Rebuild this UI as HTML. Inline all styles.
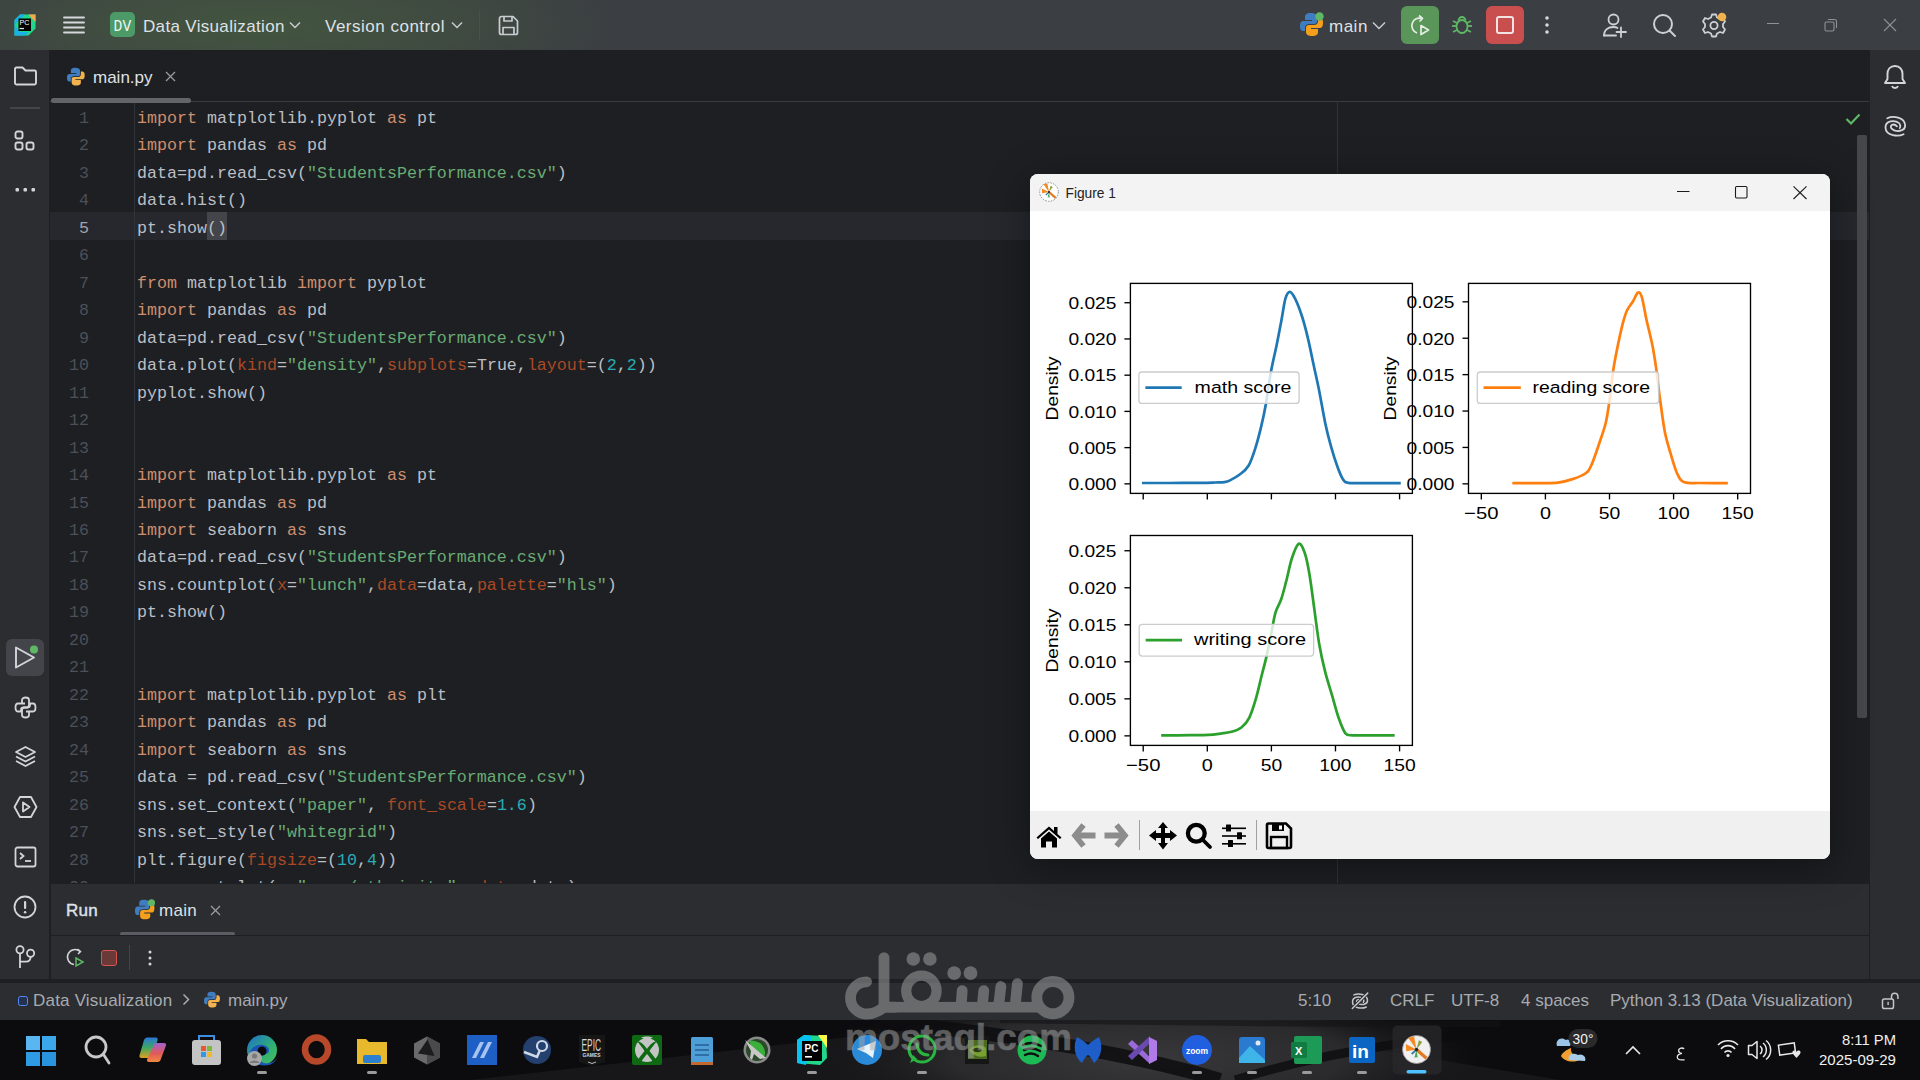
<!DOCTYPE html>
<html><head><meta charset="utf-8">
<style>
*{margin:0;padding:0;box-sizing:border-box}
html,body{width:1920px;height:1080px;overflow:hidden;background:#1e1f22;font-family:"Liberation Sans",sans-serif}
.abs{position:absolute}
svg{position:absolute;overflow:visible}
#title{left:0;top:0;width:1920px;height:50px;background:#3b3e42}
#titleglow{left:0;top:0;width:1920px;height:50px;background:radial-gradient(ellipse 360px 90px at 260px 25px,rgba(72,100,62,0.6) 0%,rgba(72,100,62,0.33) 55%,rgba(72,100,62,0) 100%)}
.tt{color:#dfe1e5;font-size:17px;white-space:nowrap;line-height:20px}
#lstrip{left:0;top:50px;width:50px;height:933px;background:#2b2d30;border-right:1px solid #1e1f22}
#rstrip{left:1869px;top:50px;width:51px;height:933px;background:#2b2d30;border-left:1px solid #1e1f22}
#tabs{left:50px;top:50px;width:1819px;height:51px;background:#1e1f22}
#editor{left:50px;top:101px;width:1819px;height:782px;background:#1e1f22;overflow:hidden}
.code{font-family:"Liberation Mono",monospace;font-size:16.67px;line-height:27.4px;color:#bcbec4;white-space:pre}
.ln{font-family:"Liberation Mono",monospace;font-size:16.67px;line-height:27.4px;color:#4b5059;text-align:right}
.ln.cur{color:#a1a3ab}
.k{color:#cf8e6d}.s{color:#6aab73}.n{color:#2aacb8}.a{color:#aa4926}
.br{background:#43454a}
#run{left:51px;top:884px;width:1818px;height:96px;background:#2b2d30}
#status{left:0;top:983px;width:1920px;height:37px;background:#2b2d30}
#task{left:0;top:1020px;width:1920px;height:60px;background:#1b1b1c}
.st{color:#a8abb0;font-size:17px;white-space:nowrap;line-height:20px}
#fig{left:1030px;top:174px;width:800px;height:685px;background:#fff;border-radius:8px;overflow:hidden;box-shadow:0 8px 40px rgba(0,0,0,0.4)}
.mpl{font-family:"Liberation Sans",sans-serif;font-size:17.5px;color:#000;white-space:nowrap;line-height:20px}
</style></head><body>
<div id="title" class="abs"></div>
<div id="titleglow" class="abs"></div>
<!-- PC logo -->
<svg style="left:14px;top:14px" width="22" height="22" viewBox="0 0 22 22">
 <path d="M6,0.5 H21.5 V14.5 L14.5,21.5 H0.5 V6 Z" fill="#21d789"/>
 <path d="M0.5,6 L6,0.5 H11 L0.5,11 Z M0.5,11 V21.5 H11 L14.5,18 H6 Z" fill="#1ab0e8"/>
 <path d="M14.5,0.5 H21.5 V8 L18,4.5 Z" fill="#f6a84a"/>
 <rect x="4.5" y="4.5" width="12.5" height="12.5" fill="#000"/>
 <text x="5.4" y="11.2" font-family="Liberation Sans" font-size="6.8" fill="#fff" textLength="10" lengthAdjust="spacingAndGlyphs">PC</text>
 <rect x="5.5" y="13.9" width="4.5" height="1.3" fill="#ddd"/>
</svg>
<!-- hamburger -->
<svg style="left:63px;top:16px" width="22" height="18" viewBox="0 0 22 18">
 <g stroke="#d6d8dc" stroke-width="1.8" stroke-linecap="round"><line x1="1" y1="1.5" x2="21" y2="1.5"/><line x1="1" y1="6.5" x2="21" y2="6.5"/><line x1="1" y1="11.5" x2="21" y2="11.5"/><line x1="1" y1="16.5" x2="21" y2="16.5"/></g>
</svg>
<div class="abs" style="left:110px;top:12px;width:25px;height:25px;border-radius:5px;background:#4c9a68"></div>
<svg style="left:110px;top:12px" width="25" height="25" viewBox="0 0 25 25"><text x="3.6" y="18.7" font-family="Liberation Mono" font-size="17" fill="#eef5ef" textLength="17.6" lengthAdjust="spacingAndGlyphs">DV</text></svg>
<div class="abs tt" style="left:143px;top:16.5px;letter-spacing:0.33px">Data Visualization</div>
<svg style="left:289px;top:21px" width="12" height="8" viewBox="0 0 12 8"><polyline points="1,1.5 6,6.5 11,1.5" fill="none" stroke="#c9ccd0" stroke-width="1.5"/></svg>
<div class="abs tt" style="left:325px;top:16.5px;letter-spacing:0.5px">Version control</div>
<svg style="left:451px;top:21px" width="12" height="8" viewBox="0 0 12 8"><polyline points="1,1.5 6,6.5 11,1.5" fill="none" stroke="#c9ccd0" stroke-width="1.5"/></svg>
<div class="abs" style="left:479px;top:10px;width:1px;height:30px;background:#4a4d52"></div>
<svg style="left:498px;top:15px" width="21" height="21" viewBox="0 0 21 21"><g fill="none" stroke="#c9ccd0" stroke-width="1.7" stroke-linejoin="round"><path d="M3.5,1.5 H15 L19.5,6 V17.5 A2,2 0 0 1 17.5,19.5 H3.5 A2,2 0 0 1 1.5,17.5 V3.5 A2,2 0 0 1 3.5,1.5 Z"/><path d="M6,1.5 V6 H14 V1.5"/><path d="M5,19.5 V12.5 H16 V19.5"/></g></svg>
<!-- right side -->
<svg style="left:1300px;top:12px" width="26" height="26" viewBox="0 0 26 26">
 <path d="M11,1 C6,1 5,3 5,5 V8 H12 V9 H3 C0,9 0,13 0,15 C0,18 2,19 3,19 H5 V16 C5,13 7,12 9,12 H14 C16,12 17,11 17,9 V5 C17,2 14,1 11,1 Z" fill="#3f7cc0"/>
 <path d="M12,24 C17,24 18,22 18,20 V17 H11 V16 H20 C23,16 23,12 23,10 C23,7 21,6 20,6 H18 V9 C18,12 16,13 14,13 H9 C7,13 6,14 6,16 V20 C6,23 9,24 12,24 Z" fill="#f59f1d"/>
 <circle cx="19.5" cy="4.5" r="4.2" fill="#5fb865"/>
</svg>
<div class="abs tt" style="left:1329px;top:16.5px;letter-spacing:0.5px">main</div>
<svg style="left:1372px;top:21px" width="14" height="9" viewBox="0 0 14 9"><polyline points="1,1.5 7,7.5 13,1.5" fill="none" stroke="#c9ccd0" stroke-width="1.5"/></svg>
<div class="abs" style="left:1401px;top:6px;width:38px;height:38px;border-radius:6px;background:#5a965a"></div>
<svg style="left:1408px;top:14px" width="24" height="22" viewBox="0 0 24 22"><g fill="none" stroke="#e6eee6" stroke-width="1.7" stroke-linejoin="round"><path d="M14,4.5 A7.5,7.5 0 1 0 9,19"/><polyline points="11,1.5 14.5,4.5 11.5,7.5"/><path d="M13,11.5 L20.5,16 L13,20.5 Z"/></g></svg>
<svg style="left:1451px;top:14px" width="22" height="22" viewBox="0 0 22 22"><g fill="none" stroke="#5fb865" stroke-width="1.8"><ellipse cx="11" cy="12.5" rx="5.5" ry="6.5"/><path d="M7.5,6.5 A3.5,3.5 0 0 1 14.5,6.5"/><line x1="1" y1="12" x2="5.5" y2="12"/><line x1="16.5" y1="12" x2="21" y2="12"/><line x1="2" y1="7" x2="6" y2="9"/><line x1="20" y1="7" x2="16" y2="9"/><line x1="2" y1="18" x2="6" y2="16"/><line x1="20" y1="18" x2="16" y2="16"/></g></svg>
<div class="abs" style="left:1486px;top:6px;width:38px;height:38px;border-radius:6px;background:#c94f4f"></div>
<div class="abs" style="left:1496px;top:16px;width:18px;height:18px;border-radius:3px;border:2px solid #f3e3e3"></div>
<svg style="left:1544px;top:15px" width="6" height="20" viewBox="0 0 6 20"><g fill="#d6d8dc"><circle cx="3" cy="3" r="1.8"/><circle cx="3" cy="10" r="1.8"/><circle cx="3" cy="17" r="1.8"/></g></svg>
<svg style="left:1602px;top:12px" width="26" height="26" viewBox="0 0 26 26"><g fill="none" stroke="#cdd0d4" stroke-width="1.8" stroke-linecap="round"><circle cx="11.5" cy="7.5" r="5"/><path d="M2,23.5 C2,18 6,15 11.5,15 C13,15 14.5,15.3 15.5,16"/><line x1="14" y1="23.5" x2="2" y2="23.5"/><line x1="19" y1="15.5" x2="19" y2="25"/><line x1="14.5" y1="20" x2="24" y2="20"/></g></svg>
<svg style="left:1652px;top:13px" width="26" height="26" viewBox="0 0 26 26"><g fill="none" stroke="#cdd0d4" stroke-width="2" stroke-linecap="round"><circle cx="11" cy="11" r="9"/><line x1="17.5" y1="17.5" x2="23" y2="23"/></g></svg>
<svg style="left:1702px;top:13px" width="26" height="26" viewBox="0 0 26 26"><g fill="none" stroke="#cdd0d4" stroke-width="1.8"><path d="M10,1.5 H14 L15,4.5 L18,6 L21,5 L23,8.5 L21,11 V14 L23,16.5 L21,20 L18,19 L15,20.5 L14,23.5 H10 L9,20.5 L6,19 L3,20 L1,16.5 L3,14 V11 L1,8.5 L3,5 L6,6 L9,4.5 Z" stroke-linejoin="round"/><circle cx="12" cy="12.5" r="3.6"/></g><circle cx="20" cy="4" r="4.3" fill="#f2b24e"/></svg>
<div class="abs" style="left:1767px;top:23px;width:12px;height:1.2px;background:#8e9196"></div>
<svg style="left:1824px;top:18px" width="14" height="14" viewBox="0 0 14 14"><g fill="none" stroke="#8e9196" stroke-width="1.1"><rect x="1" y="4" width="9" height="9" rx="1.5"/><path d="M4,1.5 H10.5 A2,2 0 0 1 12.5,3.5 V10"/></g></svg>
<svg style="left:1883px;top:18px" width="14" height="14" viewBox="0 0 14 14"><g stroke="#8e9196" stroke-width="1.1"><line x1="1" y1="1" x2="13" y2="13"/><line x1="13" y1="1" x2="1" y2="13"/></g></svg>
<div id="lstrip" class="abs"></div>
<svg style="left:13px;top:66px" width="25" height="20" viewBox="0 0 25 20"><path d="M2,3 C2,2 2.5,1.5 3.5,1.5 H9.5 L12.5,4.5 H21.5 C22.5,4.5 23,5 23,6 V17 C23,18 22.5,18.5 21.5,18.5 H3.5 C2.5,18.5 2,18 2,17 Z" fill="none" stroke="#d3d5d9" stroke-width="1.9" stroke-linejoin="round"/></svg>
<div class="abs" style="left:10px;top:107px;width:30px;height:2px;background:#43454a"></div>
<svg style="left:14px;top:130px" width="22" height="22" viewBox="0 0 22 22"><g fill="none" stroke="#d3d5d9" stroke-width="1.9"><rect x="1.5" y="1.5" width="7" height="7" rx="2"/><rect x="1.5" y="12.5" width="7" height="7" rx="2"/><rect x="12.5" y="12.5" width="7" height="7" rx="2"/></g></svg>
<svg style="left:15px;top:186px" width="21" height="8" viewBox="0 0 21 8"><g fill="#d3d5d9"><rect x="0.5" y="2" width="3.5" height="3.5" rx="1"/><rect x="8.5" y="2" width="3.5" height="3.5" rx="1"/><rect x="16.5" y="2" width="3.5" height="3.5" rx="1"/></g></svg>
<div class="abs" style="left:6px;top:639px;width:38px;height:37px;border-radius:6px;background:#43454a"></div>
<svg style="left:13px;top:645px" width="26" height="26" viewBox="0 0 26 26"><path d="M3,2.5 L21,12.5 L3,22.5 Z" fill="none" stroke="#d3d5d9" stroke-width="1.9" stroke-linejoin="round"/><circle cx="21" cy="4.5" r="4" fill="#5fb865"/></svg>
<svg style="left:14px;top:696px" width="23" height="23" viewBox="0 0 23 23"><g fill="none" stroke="#d3d5d9" stroke-width="1.8" stroke-linejoin="round"><path d="M8,7 V4 C8,2 10,1.5 11.5,1.5 C13,1.5 15,2 15,4 V9 C15,10.5 14,11.5 12.5,11.5 H9.5 C8,11.5 7,12.5 7,14 V15.5 H4 C2,15.5 1.5,13.5 1.5,11.5 C1.5,9.5 2,7.5 4,7.5 H11"/><path d="M15,16 V19 C15,21 13,21.5 11.5,21.5 C10,21.5 8,21 8,19 V14 C8,12.5 9,11.5 10.5,11.5 H13.5 C15,11.5 16,10.5 16,9 V7.5 H19 C21,7.5 21.5,9.5 21.5,11.5 C21.5,13.5 21,15.5 19,15.5 H12"/></g></svg>
<svg style="left:14px;top:745px" width="23" height="23" viewBox="0 0 23 23"><g fill="none" stroke="#d3d5d9" stroke-width="1.8" stroke-linejoin="round"><path d="M11.5,2 L21,7 L11.5,12 L2,7 Z"/><path d="M2,11.5 L11.5,16.5 L21,11.5"/><path d="M2,16 L11.5,21 L21,16"/></g></svg>
<svg style="left:13px;top:795px" width="25" height="24" viewBox="0 0 25 24"><g fill="none" stroke="#d3d5d9" stroke-width="1.8" stroke-linejoin="round"><path d="M7,2 H18 L23.5,12 L18,22 H7 L1.5,12 Z"/><path d="M10,7.5 L16.5,12 L10,16.5 Z"/></g></svg>
<svg style="left:14px;top:846px" width="23" height="22" viewBox="0 0 23 22"><g fill="none" stroke="#d3d5d9" stroke-width="1.8"><rect x="1.5" y="1.5" width="20" height="19" rx="2"/><polyline points="6,7 9.5,10 6,13"/><line x1="11" y1="15" x2="17" y2="15"/></g></svg>
<svg style="left:13px;top:895px" width="24" height="24" viewBox="0 0 24 24"><g fill="none" stroke="#d3d5d9" stroke-width="1.8"><circle cx="12" cy="12" r="10.5"/></g><rect x="11" y="6" width="2.2" height="8" rx="1" fill="#d3d5d9"/><circle cx="12.1" cy="17.2" r="1.3" fill="#d3d5d9"/></svg>
<svg style="left:10px;top:940px" width="30" height="32" viewBox="10 940 30 32"><g fill="none" stroke="#d3d5d9" stroke-width="1.8"><circle cx="20" cy="949.8" r="3.6"/><circle cx="30.6" cy="953.2" r="3.6"/><path d="M20,953.4 V968"/><path d="M30.6,956.8 C30.6,960 29,961.7 26,961.7 H20"/></g></svg>
<div id="rstrip" class="abs"></div>
<svg style="left:1883px;top:64px" width="24" height="26" viewBox="0 0 24 26"><g fill="none" stroke="#d3d5d9" stroke-width="1.9" stroke-linejoin="round"><path d="M12,2 C7,2 4.5,5.5 4.5,10 V15 L2,19 H22 L19.5,15 V10 C19.5,5.5 17,2 12,2 Z"/><path d="M9,22 C9.5,23.5 10.5,24 12,24 C13.5,24 14.5,23.5 15,22"/></g></svg>
<svg style="left:1860px;top:100px" width="60" height="50" viewBox="1860 100 60 50"><g fill="none" stroke="#d3d5d9" stroke-width="1.8" stroke-linecap="round"><path d="M1887.3,118.3 C1893,115.6 1904.4,117.1 1905.1,125 C1905.8,131.5 1895.2,132.6 1891.6,128.7 C1889,125.4 1893.5,122.6 1897,126.3"/><path d="M1903.6,134.2 C1898.6,136.7 1885.9,136.3 1885.5,127.8 C1885.2,120.8 1894.5,119.6 1898.8,122.9 C1900.5,124.2 1900.6,127 1899.8,128"/></g></svg>
<div id="tabs" class="abs"></div>
<svg style="left:66.5px;top:66.5px" width="20" height="20" viewBox="0 0 26 26">
 <path d="M11,1 C6,1 5,3 5,5 V8 H12 V9 H3 C0,9 0,13 0,15 C0,18 2,19 3,19 H5 V16 C5,13 7,12 9,12 H14 C16,12 17,11 17,9 V5 C17,2 14,1 11,1 Z" fill="#3f7cc0"/>
 <path d="M12,24 C17,24 18,22 18,20 V17 H11 V16 H20 C23,16 23,12 23,10 C23,7 21,6 20,6 H18 V9 C18,12 16,13 14,13 H9 C7,13 6,14 6,16 V20 C6,23 9,24 12,24 Z" fill="#f2b24e"/>
</svg>
<div class="abs tt" style="left:93px;top:68px;color:#dfe1e5">main.py</div>
<svg style="left:165px;top:71px" width="11" height="11" viewBox="0 0 11 11"><g stroke="#9a9da2" stroke-width="1.3"><line x1="1" y1="1" x2="10" y2="10"/><line x1="10" y1="1" x2="1" y2="10"/></g></svg>
<div class="abs" style="left:51px;top:97.5px;width:140px;height:5.5px;border-radius:3px;background:#626468;z-index:5"></div>
<div id="editor" class="abs"><div id="tabline" class="abs" style="left:0;top:0;width:1819px;height:1px;background:#393b40"></div>
<div class="abs" style="left:0;top:111px;width:1819px;height:28px;background:#26282e"></div>
<div class="abs" style="left:157px;top:111px;width:20px;height:28px;background:#43454a"></div>
<div class="abs" style="left:84px;top:0;width:1px;height:783px;background:#313338"></div>
<div class="abs" style="left:1287px;top:0;width:1px;height:783px;background:#313338"></div>
<svg style="left:1795px;top:12px" width="16" height="12" viewBox="0 0 16 12"><polyline points="1.5,6 6,10.5 14.5,1.5" fill="none" stroke="#5fb865" stroke-width="2.2"/></svg>
<div class="abs" style="left:1807px;top:34px;width:10px;height:583px;border-radius:2px;background:#46474b"></div>
<div class="abs ln" style="left:0;top:3.80px;width:39px">1</div>
<div class="abs code" style="left:87px;top:3.80px"><span class="k">import</span> matplotlib.pyplot <span class="k">as</span> pt</div>
<div class="abs ln" style="left:0;top:31.28px;width:39px">2</div>
<div class="abs code" style="left:87px;top:31.28px"><span class="k">import</span> pandas <span class="k">as</span> pd</div>
<div class="abs ln" style="left:0;top:58.76px;width:39px">3</div>
<div class="abs code" style="left:87px;top:58.76px">data=pd.read_csv(<span class="s">"StudentsPerformance.csv"</span>)</div>
<div class="abs ln" style="left:0;top:86.24px;width:39px">4</div>
<div class="abs code" style="left:87px;top:86.24px">data.hist()</div>
<div class="abs ln cur" style="left:0;top:113.72px;width:39px">5</div>
<div class="abs code" style="left:87px;top:113.72px">pt.show()</div>
<div class="abs ln" style="left:0;top:141.20px;width:39px">6</div>
<div class="abs code" style="left:87px;top:141.20px"></div>
<div class="abs ln" style="left:0;top:168.68px;width:39px">7</div>
<div class="abs code" style="left:87px;top:168.68px"><span class="k">from</span> matplotlib <span class="k">import</span> pyplot</div>
<div class="abs ln" style="left:0;top:196.16px;width:39px">8</div>
<div class="abs code" style="left:87px;top:196.16px"><span class="k">import</span> pandas <span class="k">as</span> pd</div>
<div class="abs ln" style="left:0;top:223.64px;width:39px">9</div>
<div class="abs code" style="left:87px;top:223.64px">data=pd.read_csv(<span class="s">"StudentsPerformance.csv"</span>)</div>
<div class="abs ln" style="left:0;top:251.12px;width:39px">10</div>
<div class="abs code" style="left:87px;top:251.12px">data.plot(<span class="a">kind</span>=<span class="s">"density"</span>,<span class="a">subplots</span>=True,<span class="a">layout</span>=(<span class="n">2</span>,<span class="n">2</span>))</div>
<div class="abs ln" style="left:0;top:278.60px;width:39px">11</div>
<div class="abs code" style="left:87px;top:278.60px">pyplot.show()</div>
<div class="abs ln" style="left:0;top:306.08px;width:39px">12</div>
<div class="abs code" style="left:87px;top:306.08px"></div>
<div class="abs ln" style="left:0;top:333.56px;width:39px">13</div>
<div class="abs code" style="left:87px;top:333.56px"></div>
<div class="abs ln" style="left:0;top:361.04px;width:39px">14</div>
<div class="abs code" style="left:87px;top:361.04px"><span class="k">import</span> matplotlib.pyplot <span class="k">as</span> pt</div>
<div class="abs ln" style="left:0;top:388.52px;width:39px">15</div>
<div class="abs code" style="left:87px;top:388.52px"><span class="k">import</span> pandas <span class="k">as</span> pd</div>
<div class="abs ln" style="left:0;top:416.00px;width:39px">16</div>
<div class="abs code" style="left:87px;top:416.00px"><span class="k">import</span> seaborn <span class="k">as</span> sns</div>
<div class="abs ln" style="left:0;top:443.48px;width:39px">17</div>
<div class="abs code" style="left:87px;top:443.48px">data=pd.read_csv(<span class="s">"StudentsPerformance.csv"</span>)</div>
<div class="abs ln" style="left:0;top:470.96px;width:39px">18</div>
<div class="abs code" style="left:87px;top:470.96px">sns.countplot(<span class="a">x</span>=<span class="s">"lunch"</span>,<span class="a">data</span>=data,<span class="a">palette</span>=<span class="s">"hls"</span>)</div>
<div class="abs ln" style="left:0;top:498.44px;width:39px">19</div>
<div class="abs code" style="left:87px;top:498.44px">pt.show()</div>
<div class="abs ln" style="left:0;top:525.92px;width:39px">20</div>
<div class="abs code" style="left:87px;top:525.92px"></div>
<div class="abs ln" style="left:0;top:553.40px;width:39px">21</div>
<div class="abs code" style="left:87px;top:553.40px"></div>
<div class="abs ln" style="left:0;top:580.88px;width:39px">22</div>
<div class="abs code" style="left:87px;top:580.88px"><span class="k">import</span> matplotlib.pyplot <span class="k">as</span> plt</div>
<div class="abs ln" style="left:0;top:608.36px;width:39px">23</div>
<div class="abs code" style="left:87px;top:608.36px"><span class="k">import</span> pandas <span class="k">as</span> pd</div>
<div class="abs ln" style="left:0;top:635.84px;width:39px">24</div>
<div class="abs code" style="left:87px;top:635.84px"><span class="k">import</span> seaborn <span class="k">as</span> sns</div>
<div class="abs ln" style="left:0;top:663.32px;width:39px">25</div>
<div class="abs code" style="left:87px;top:663.32px">data = pd.read_csv(<span class="s">"StudentsPerformance.csv"</span>)</div>
<div class="abs ln" style="left:0;top:690.80px;width:39px">26</div>
<div class="abs code" style="left:87px;top:690.80px">sns.set_context(<span class="s">"paper"</span>, <span class="a">font_scale</span>=<span class="n">1.6</span>)</div>
<div class="abs ln" style="left:0;top:718.28px;width:39px">27</div>
<div class="abs code" style="left:87px;top:718.28px">sns.set_style(<span class="s">"whitegrid"</span>)</div>
<div class="abs ln" style="left:0;top:745.76px;width:39px">28</div>
<div class="abs code" style="left:87px;top:745.76px">plt.figure(<span class="a">figsize</span>=(<span class="n">10</span>,<span class="n">4</span>))</div>
<div class="abs ln" style="left:0;top:773.24px;width:39px">29</div>
<div class="abs code" style="left:87px;top:773.24px">sns.countplot(<span class="a">x</span>=<span class="s">"race/ethnicity"</span>, <span class="a">data</span>=data)</div>
</div><div id="run" class="abs"></div>
<div class="abs tt" style="left:66px;top:901px;color:#dfe1e5;-webkit-text-stroke:0.45px #dfe1e5;letter-spacing:0.3px">Run</div>
<svg style="left:135px;top:899px" width="22" height="22" viewBox="0 0 26 26">
 <path d="M11,1 C6,1 5,3 5,5 V8 H12 V9 H3 C0,9 0,13 0,15 C0,18 2,19 3,19 H5 V16 C5,13 7,12 9,12 H14 C16,12 17,11 17,9 V5 C17,2 14,1 11,1 Z" fill="#3f7cc0"/>
 <path d="M12,24 C17,24 18,22 18,20 V17 H11 V16 H20 C23,16 23,12 23,10 C23,7 21,6 20,6 H18 V9 C18,12 16,13 14,13 H9 C7,13 6,14 6,16 V20 C6,23 9,24 12,24 Z" fill="#f59f1d"/>
 <circle cx="19.5" cy="4.5" r="4.2" fill="#5fb865"/>
</svg>
<div class="abs tt" style="left:159px;top:901px;letter-spacing:0.3px">main</div>
<svg style="left:210px;top:905px" width="11" height="11" viewBox="0 0 11 11"><g stroke="#9a9da2" stroke-width="1.3"><line x1="1" y1="1" x2="10" y2="10"/><line x1="10" y1="1" x2="1" y2="10"/></g></svg>
<div class="abs" style="left:120px;top:932px;width:115px;height:4px;border-radius:2px;background:#5a5d63"></div>
<div class="abs" style="left:51px;top:935px;width:1818px;height:1px;background:#1e1f22"></div>
<svg style="left:66px;top:948px" width="20" height="20" viewBox="0 0 20 20"><g fill="none" stroke="#d3d5d9" stroke-width="1.5"><path d="M14,3.5 A7.5,7.5 0 1 0 8,16.5"/><polyline points="11.5,1 14.5,3.5 12,6"/></g><path d="M10,10 L17,14 L10,18 Z" fill="none" stroke="#5fb865" stroke-width="1.5"/></svg>
<div class="abs" style="left:101px;top:950px;width:16px;height:16px;border-radius:3px;border:1.5px solid #d9534f;background:#6b3a38"></div>
<div class="abs" style="left:129px;top:945px;width:1px;height:25px;background:#43454a"></div>
<svg style="left:147px;top:950px" width="6" height="16" viewBox="0 0 6 16"><g fill="#d6d8dc"><circle cx="3" cy="2" r="1.5"/><circle cx="3" cy="8" r="1.5"/><circle cx="3" cy="14" r="1.5"/></g></svg>
<div class="abs" style="left:0;top:979px;width:1920px;height:4px;background:#1e1f22"></div>
<div id="status" class="abs"></div>
<div class="abs" style="left:18px;top:996px;width:10px;height:10px;border-radius:2.5px;border:1.5px solid #548af7;background:#25324f"></div>
<div class="abs st" style="left:33px;top:991px;letter-spacing:0.2px">Data Visualization</div>
<svg style="left:182px;top:993px" width="8" height="13" viewBox="0 0 8 13"><polyline points="1.5,1.5 6.5,6.5 1.5,11.5" fill="none" stroke="#a8abb0" stroke-width="1.5"/></svg>
<svg style="left:204px;top:991px" width="18" height="18" viewBox="0 0 26 26">
 <path d="M11,1 C6,1 5,3 5,5 V8 H12 V9 H3 C0,9 0,13 0,15 C0,18 2,19 3,19 H5 V16 C5,13 7,12 9,12 H14 C16,12 17,11 17,9 V5 C17,2 14,1 11,1 Z" fill="#3f7cc0"/>
 <path d="M12,24 C17,24 18,22 18,20 V17 H11 V16 H20 C23,16 23,12 23,10 C23,7 21,6 20,6 H18 V9 C18,12 16,13 14,13 H9 C7,13 6,14 6,16 V20 C6,23 9,24 12,24 Z" fill="#f2b24e"/>
</svg>
<div class="abs st" style="left:228px;top:991px">main.py</div>
<div class="abs st" style="left:1298px;top:991px">5:10</div>
<svg style="left:1340px;top:984px" width="40" height="34" viewBox="1340 984 40 34"><g transform="translate(1360,1001) scale(0.76) translate(-1895.3,-126.3)" fill="none" stroke="#c4c6ca" stroke-width="2" stroke-linecap="round"><path d="M1887.3,118.3 C1893,115.6 1904.4,117.1 1905.1,125 C1905.8,131.5 1895.2,132.6 1891.6,128.7 C1889,125.4 1893.5,122.6 1897,126.3"/><path d="M1903.6,134.2 C1898.6,136.7 1885.9,136.3 1885.5,127.8 C1885.2,120.8 1894.5,119.6 1898.8,122.9 C1900.5,124.2 1900.6,127 1899.8,128"/></g><line x1="1352.3" y1="1008.5" x2="1367.7" y2="993.1" stroke="#2b2d30" stroke-width="3.2"/><line x1="1352.3" y1="1008.5" x2="1367.7" y2="993.1" stroke="#c4c6ca" stroke-width="1.5" stroke-linecap="round"/></svg>
<div class="abs st" style="left:1390px;top:991px">CRLF</div>
<div class="abs st" style="left:1451px;top:991px">UTF-8</div>
<div class="abs st" style="left:1521px;top:991px">4 spaces</div>
<div class="abs st" style="left:1610px;top:991px">Python 3.13 (Data Visualization)</div>
<svg style="left:1880px;top:990px" width="20" height="20" viewBox="0 0 20 20"><g fill="none" stroke="#c4c6ca" stroke-width="1.5"><rect x="2.5" y="9" width="11" height="9.5" rx="1.8"/><path d="M11.5,9 V6.5 A3.2,3.2 0 0 1 17.9,6.5 V9"/></g><rect x="7.4" y="11.8" width="1.4" height="3.2" fill="#c4c6ca"/></svg>
<div id="task" class="abs"></div>
<div class="abs" style="left:0;top:1020px;width:1920px;height:60px;background:#0c0c0e"></div>
<svg style="left:0;top:1020px;overflow:hidden" width="1920" height="60" viewBox="0 1020 1920 60">
 <defs>
  <radialGradient id="tbl" cx="1150" cy="1058" r="330" gradientUnits="userSpaceOnUse" gradientTransform="translate(1150 1058) scale(1 0.22) translate(-1150 -1058)"><stop offset="0" stop-color="#38383a"/><stop offset="0.6" stop-color="#2a2a2c"/><stop offset="1" stop-color="#1a1a1c" stop-opacity="0"/></radialGradient>
 </defs>
 <polygon points="470,1080 990,1021 1200,1020 1560,1080" fill="#17171a"/>
 <rect x="800" y="1020" width="720" height="60" fill="url(#tbl)"/>
 <path d="M860,1020 C980,1030 1120,1050 1220,1080" fill="none" stroke="#0d0d0f" stroke-width="14" opacity="0.85"/>
 <path d="M1235,1080 C1330,1050 1450,1032 1620,1022" fill="none" stroke="#0d0d0f" stroke-width="9" opacity="0.8"/>
 <path d="M1000,1020 C1150,1022 1300,1025 1500,1024" fill="none" stroke="#141416" stroke-width="6" opacity="0.6"/>
 <!-- 1 windows -->
 <g fill="#3aa0e8"><rect x="26" y="1036" width="14" height="14" fill="#5ab6f0"/><rect x="42" y="1036" width="14" height="14" fill="#3ca8ec"/><rect x="26" y="1052" width="14" height="14" fill="#2f9be4"/><rect x="42" y="1052" width="14" height="14" fill="#2a93de"/></g>
 <!-- 2 search -->
 <g fill="none" stroke="#c8c8c8" stroke-width="2.8"><circle cx="96" cy="1047" r="10"/><line x1="103.5" y1="1054.5" x2="109" y2="1063" stroke-linecap="round"/></g>
 <!-- 3 copilot -->
 <defs>
  <linearGradient id="cpL" x1="0" y1="0" x2="0" y2="1"><stop offset="0" stop-color="#2a78d8"/><stop offset="0.5" stop-color="#3fa860"/><stop offset="1" stop-color="#e0a020"/></linearGradient>
  <linearGradient id="cpR" x1="0" y1="0" x2="0" y2="1"><stop offset="0" stop-color="#a060d0"/><stop offset="0.55" stop-color="#e05a5a"/><stop offset="1" stop-color="#f08a40"/></linearGradient>
  <linearGradient id="edg" x1="0" y1="0" x2="1" y2="1"><stop offset="0" stop-color="#1f6fd0"/><stop offset="0.6" stop-color="#2fb070"/><stop offset="1" stop-color="#4cc060"/></linearGradient>
 </defs>
 <path d="M144,1040 C145,1038 146,1037.5 148,1037.5 H156 C157.5,1037.5 158,1039 157.5,1040.5 L152,1056 C151.5,1057.5 150,1058 148.5,1058 H141.5 C140,1058 139,1057 139.5,1055.5 Z" fill="url(#cpL)"/>
 <path d="M154,1045 C154.5,1043.5 155.5,1043 157,1043 H164 C165.5,1043 166.5,1044 166,1045.5 L160.5,1060 C160,1061.5 158.5,1062 157,1062 H149 C147.5,1062 146.5,1061 147,1059.5 Z" fill="url(#cpR)"/>
 <!-- 4 store -->
 <rect x="192" y="1040" width="29" height="25" rx="3" fill="#c4c4c4"/>
 <path d="M199,1040 V1036 H214 V1040" fill="none" stroke="#3a8fe0" stroke-width="2"/>
 <rect x="201" y="1046" width="5" height="5" fill="#e55a2b"/><rect x="207" y="1046" width="5" height="5" fill="#7cb83a"/><rect x="201" y="1052" width="5" height="5" fill="#2f9be4"/><rect x="207" y="1052" width="5" height="5" fill="#f3b82a"/>
 <!-- 5 edge -->
 <circle cx="262" cy="1050" r="15" fill="url(#edg)"/>
 <path d="M250,1052 C252,1046 260,1043 266,1046 C270,1048 270,1053 266,1054 C262,1055 258,1058 262,1062 C266,1065 274,1063 277,1058 C274,1066 262,1068 254,1062 C249,1058 248,1055 250,1052 Z" fill="#1a56b8"/>
 <circle cx="262" cy="1051" r="4.5" fill="#0a0a0a"/>
 <circle cx="254.5" cy="1058.5" r="7.5" fill="#a8a8a8"/><circle cx="254.5" cy="1056" r="2.6" fill="#7a7a7a"/><path d="M249.5,1063 C250.5,1059.5 258.5,1059.5 259.5,1063 Z" fill="#7a7a7a"/>
 <rect x="257" y="1071" width="10" height="3" rx="1.5" fill="#9a9a9a"/>
 <!-- 6 opera -->
 <ellipse cx="316.5" cy="1049.5" rx="11.5" ry="12" fill="none" stroke="#b8482a" stroke-width="6.5"/>
 <!-- 7 explorer -->
 <path d="M357,1039 H366 L369,1042 H387 V1064 H357 Z" fill="#e8b92c"/>
 <rect x="363" y="1055" width="18" height="8" rx="2" fill="#2d7fd0"/>
 <rect x="367" y="1071" width="10" height="3" rx="1.5" fill="#9a9a9a"/>
 <!-- 8 hex -->
 <path d="M427,1036.5 L440,1043.5 V1057.5 L427,1064.5 L414,1057.5 V1043.5 Z" fill="#6a6a6c"/>
 <path d="M427,1036.5 L440,1043.5 V1057.5 L427,1064.5 Z" fill="#4a4a4c"/>
 <path d="M427.5,1039.5 L434.5,1056 L418,1053.5 Z" fill="#1c1c1e"/>
 <!-- 9 //A -->
 <rect x="467" y="1035" width="30" height="30" fill="#1d5fc4"/>
 <path d="M472,1058 L480,1042 H484 L476,1058 Z M480,1058 L488,1042 H492 L484,1058 Z" fill="#a9c4ec"/>
 <!-- 10 steam -->
 <circle cx="537" cy="1050" r="14" fill="#23406e"/>
 <circle cx="542" cy="1046" r="5" fill="none" stroke="#d0d8e8" stroke-width="2.2"/>
 <path d="M524,1052 L537,1057 L540,1050" fill="none" stroke="#d0d8e8" stroke-width="2.5"/>
 <!-- 11 epic -->
 <path d="M579,1035 H605 V1062 L592,1066 L579,1062 Z" fill="#161616"/><path d="M588,1062 L592,1063.5 L596,1062" fill="none" stroke="#cfcfcf" stroke-width="0.9"/>
 <text x="581.5" y="1050.6" font-family="Liberation Sans" font-size="16" fill="#d8d8d8" textLength="19.5" lengthAdjust="spacingAndGlyphs">EPIC</text>
 <text x="582.5" y="1057.3" font-family="Liberation Sans" font-size="5.8" font-weight="bold" fill="#d8d8d8" textLength="18" lengthAdjust="spacingAndGlyphs">GAMES</text>
 <!-- 12 xbox -->
 <rect x="632" y="1035" width="30" height="30" rx="2" fill="#0e6a12"/>
 <circle cx="647" cy="1050" r="12" fill="#c4c4c4"/>
 <path d="M637,1041 C642,1042 645,1046 647,1049 C649,1046 652,1042 657,1041 C654,1045 651,1048 649.5,1051 C652,1054 655,1058 657,1061 L653,1062 C651,1059 649,1056 647,1054 C645,1056 643,1059 641,1062 L637,1061 C639,1058 642,1054 644.5,1051 C643,1048 640,1045 637,1041 Z" fill="#0e6a12"/>
 <path d="M641,1037.5 C644,1036 650,1036 653,1037.5 C651,1038.5 649,1039.5 647,1041 C645,1039.5 643,1038.5 641,1037.5 Z" fill="#c4c4c4"/>
 <!-- 13 notepad -->
 <rect x="691" y="1037" width="22" height="28" rx="1.5" fill="#4e9fd8"/>
 <rect x="691" y="1062" width="22" height="3" fill="#c46a30"/>
 <g stroke="#1d4f80" stroke-width="1.2"><line x1="695" y1="1045" x2="709" y2="1045"/><line x1="695" y1="1050" x2="709" y2="1050"/><line x1="695" y1="1055" x2="709" y2="1055"/></g>
 <!-- 14 jet -->
 <circle cx="757" cy="1050" r="13.5" fill="#8a8a8a"/>
 <circle cx="757" cy="1050" r="11" fill="#2a4a2a"/>
 <path d="M749,1041 C753,1040 760,1042 762,1045 C765,1049 766,1054 764,1057 C760,1056 756,1053 752,1049 Z" fill="#3ab03a"/>
 <path d="M745,1040 L766,1058 L760,1059 L754,1054 L752,1060 L750,1058 L751,1051 Z" fill="#c8c8c8"/>
 <!-- 15 pycharm -->
 <path d="M797,1040 L804,1035 L826,1036 L827,1058 L820,1065 L797,1063 Z" fill="#21d789"/>
 <path d="M797,1040 L804,1035 L812,1036 L806,1065 L797,1063 Z" fill="#07c3f2"/>
 <path d="M818,1035 L827,1035 L827,1048 Z" fill="#fcf84a"/>
 <rect x="802" y="1041" width="20" height="20" fill="#000"/>
 <text x="804.5" y="1052" font-family="Liberation Sans" font-size="10" font-weight="bold" fill="#fff">PC</text>
 <rect x="805" y="1056" width="7" height="1.6" fill="#fff"/>
 <rect x="807" y="1071" width="10" height="3" rx="1.5" fill="#9a9a9a"/>
 <!-- 16 telegram -->
 <circle cx="867" cy="1050" r="15" fill="#2b8ad8"/>
 <path d="M857,1049 L876,1041 L873,1058 L866,1053 Z" fill="#e8f2fb"/>
 <!-- 17 whatsapp -->
 <circle cx="922" cy="1049" r="13" fill="none" stroke="#2ab540" stroke-width="3"/>
 <path d="M910,1063 L913,1055 L917,1059 Z" fill="#2ab540"/>
 <path d="M917,1044 C918,1052 922,1055 928,1055" fill="none" stroke="#2ab540" stroke-width="3" stroke-linecap="round"/>
 <rect x="917" y="1071" width="10" height="3" rx="1.5" fill="#9a9a9a"/>
 <!-- 18 nvidia -->
 <rect x="965" y="1036" width="24" height="28" fill="#161616"/>
 <rect x="968" y="1040" width="19" height="19" fill="#4a6a22"/>
 <path d="M969,1050 C973,1044 982,1044 986,1048 L986,1056 C980,1058 973,1056 969,1050 Z" fill="#76a032"/>
 <path d="M972,1050 C975,1047 980,1047 982,1050 C980,1053 975,1053 972,1050 Z" fill="#2a3a12"/>
 <!-- 19 spotify -->
 <circle cx="1032" cy="1050" r="14.5" fill="#1db954"/>
 <g fill="none" stroke="#101010" stroke-width="2.5" stroke-linecap="round"><path d="M1023,1045 C1029,1042 1036,1043 1041,1046"/><path d="M1024,1050 C1029,1048 1035,1048 1040,1051"/><path d="M1025,1055 C1029,1053 1034,1053 1038,1056"/></g>
 <!-- 20 malwarebytes -->
 <path d="M1077,1037 C1081,1039 1085,1042 1088,1045 C1091,1042 1095,1039 1099,1037 C1103,1045 1102,1057 1094,1063 C1092,1059 1090,1056 1088,1055 C1086,1056 1084,1059 1082,1063 C1074,1057 1073,1045 1077,1037 Z" fill="#1e5ec8"/>
 <!-- 21 VS -->
 <path d="M1128,1044 L1132,1040 L1150,1057 L1150,1064 Z" fill="#9a6ad8"/>
 <path d="M1128,1056 L1132,1060 L1150,1043 L1150,1036 Z" fill="#6a4ab0"/>
 <path d="M1149,1037 L1157,1041 V1060 L1149,1064 Z" fill="#b07ae8"/>
 <!-- 22 zoom -->
 <circle cx="1197" cy="1050" r="15" fill="#1f5fe0"/>
 <text x="1197" y="1053.5" font-family="Liberation Sans" font-size="8.5" font-weight="bold" fill="#fff" text-anchor="middle">zoom</text>
 <rect x="1192" y="1071" width="10" height="3" rx="1.5" fill="#9a9a9a"/>
 <!-- 23 photos -->
 <rect x="1239" y="1037" width="26" height="26" rx="3" fill="#2a7ad0"/>
 <path d="M1239,1058 L1250,1046 L1265,1060 V1063 H1239 Z" fill="#3fb4e8"/>
 <circle cx="1258" cy="1043" r="2.5" fill="#e0e8f0"/>
 <rect x="1247" y="1071" width="10" height="3" rx="1.5" fill="#9a9a9a"/>
 <!-- 24 excel -->
 <rect x="1294" y="1036" width="28" height="28" rx="2" fill="#1d9a55"/>
 <rect x="1291" y="1042" width="16" height="16" rx="1.5" fill="#107c41"/>
 <text x="1295" y="1055" font-family="Liberation Sans" font-size="11" font-weight="bold" fill="#fff">X</text>
 <rect x="1302" y="1071" width="10" height="3" rx="1.5" fill="#9a9a9a"/>
 <!-- 25 linkedin -->
 <rect x="1349" y="1037" width="26" height="26" rx="2" fill="#0a66c2"/>
 <text x="1352" y="1058" font-family="Liberation Sans" font-size="19" font-weight="bold" fill="#fff">in</text>
 <rect x="1357" y="1071" width="10" height="3" rx="1.5" fill="#9a9a9a"/>
 <!-- 26 matplotlib active -->
 <rect x="1392.5" y="1025.5" width="49" height="49" rx="5" fill="#2a2a2c" opacity="0.75"/>
 <circle cx="1416.5" cy="1049.5" r="14" fill="#f0f0f0" stroke="#999" stroke-width="0.8"/>
 <g transform="translate(1416.5,1049.5) scale(1.5)"><path d="M0,0 L-5.6,-7.8 L-1.6,-8.6 Z" fill="#f58a1f"/><path d="M0,0 L-7.2,-3.6 L-6.8,1.2 Z" fill="#f58a1f"/><path d="M0,0 L6.6,5.8" stroke="#e07a20" stroke-width="2.2"/><path d="M0,0 L-1.4,5.4 L0.8,5.2 Z" fill="#4aa85a"/><path d="M0,0 L1.6,-6.2 L3.8,-5.0 Z" fill="#8aa03a"/><path d="M0,0 L-3.2,3.0" stroke="#3a7aa8" stroke-width="1.2"/><circle r="1.1" fill="#223"/></g>
 <rect x="1406.5" y="1070" width="20" height="3.5" rx="1.75" fill="#4cc2ff"/>
 <!-- tray -->
 <path d="M1557,1046 C1555,1040 1561,1036 1566,1040 C1569,1038 1572,1042 1570,1046 Z" fill="#9cc4e8"/>
 <path d="M1561,1056 C1564,1062 1576,1064 1582,1058 C1576,1058 1570,1054 1571,1048 C1566,1050 1562,1053 1561,1056 Z" fill="#f0a030"/>
 <path d="M1569,1060 C1567,1055 1573,1052 1578,1055 C1582,1053 1587,1057 1585,1061 Z" fill="#a8cce8"/>
 <rect x="1568.5" y="1029" width="29" height="19" rx="9.5" fill="#2a2a2c"/>
 <text x="1583" y="1043.6" font-family="Liberation Sans" font-size="13.8" fill="#f0f0f0" text-anchor="middle">30°</text>
 <polyline points="1626,1054 1633,1047 1640,1054" fill="none" stroke="#e8e8e8" stroke-width="1.6"/>
 <path d="M1684.2,1048.6 C1681.5,1047.3 1678.2,1048.3 1678.6,1050.8 C1678.9,1052.6 1680.6,1053.3 1682,1053.3 C1679,1053.6 1677,1055.3 1677.3,1057.5 C1677.6,1059.3 1679.5,1059.8 1681.5,1059.8 H1684.6" fill="none" stroke="#e8e8e8" stroke-width="1.3"/>
 <g fill="none" stroke="#e8e8e8" stroke-width="1.6"><path d="M1718,1045 A14,14 0 0 1 1738,1045"/><path d="M1721,1049 A9,9 0 0 1 1735,1049"/><path d="M1724.5,1052.5 A4.5,4.5 0 0 1 1731.5,1052.5"/></g>
 <circle cx="1728" cy="1055.5" r="1.6" fill="#e8e8e8"/>
 <g fill="none" stroke="#e8e8e8" stroke-width="1.5" stroke-linejoin="round"><path d="M1748.5,1045.5 H1752 L1757,1041.5 V1058.5 L1752,1054.5 H1748.5 Z"/><path d="M1760,1046 A5,5 0 0 1 1760,1054"/><path d="M1763,1043 A9,9 0 0 1 1763,1057"/><path d="M1766,1040.5 A12,12 0 0 1 1766,1059.5"/></g>
 <g fill="none" stroke="#e8e8e8" stroke-width="1.5"><path d="M1779,1044 H1795 V1054 H1779 Z" transform="rotate(-8 1787 1049)"/></g>
 <path d="M1793,1054 C1791,1051 1795,1049 1796.5,1052 C1798,1049 1802,1051 1800,1054 L1796.5,1058 Z" fill="#e8e8e8"/>
 <text x="1896" y="1045" font-family="Liberation Sans" font-size="14.6" fill="#f0f0f0" text-anchor="end" textLength="54" lengthAdjust="spacingAndGlyphs">8:11 PM</text>
 <text x="1819" y="1064.6" font-family="Liberation Sans" font-size="15" fill="#f0f0f0" textLength="77" lengthAdjust="spacingAndGlyphs">2025-09-29</text>
</svg>
<div id="fig" class="abs">
<div class="abs" style="left:0;top:0;width:800px;height:36.5px;background:#f3f3f3"></div>
<div class="abs" style="left:0;top:637px;width:800px;height:48px;background:#f0f0f0"></div>
<svg style="left:0;top:0" width="800" height="685" viewBox="1030 174 800 685">
<circle cx="1049" cy="192" r="9.3" fill="#fff" stroke="#777" stroke-width="0.8" stroke-dasharray="1.6 1.2"/>
<g transform="translate(1049,192)"><path d="M0,0 L-5.6,-7.8 L-1.6,-8.6 Z" fill="#f58a1f"/><path d="M0,0 L-7.2,-3.6 L-6.8,1.2 Z" fill="#f58a1f"/><path d="M0,0 L6.6,5.8" stroke="#e07a20" stroke-width="2.2"/><path d="M0,0 L-1.4,5.4 L0.8,5.2 Z" fill="#4aa85a"/><path d="M0,0 L1.6,-6.2 L3.8,-5.0 Z" fill="#8aa03a"/><path d="M0,0 L-3.2,3.0" stroke="#3a7aa8" stroke-width="1.2"/><circle r="1.1" fill="#223"/></g>
<text x="1065.5" y="198" font-family="Liberation Sans" font-size="15.2" fill="#222" textLength="50.5" lengthAdjust="spacingAndGlyphs">Figure 1</text>
<line x1="1677" y1="191.5" x2="1689.5" y2="191.5" stroke="#1a1a1a" stroke-width="1.1"/>
<rect x="1735.5" y="186.5" width="11.5" height="11.5" rx="1.2" fill="none" stroke="#1a1a1a" stroke-width="1.1"/>
<g stroke="#1a1a1a" stroke-width="1.1"><line x1="1793.5" y1="186.3" x2="1806.5" y2="199"/><line x1="1806.5" y1="186.3" x2="1793.5" y2="199"/></g>
<path d="M1143.3,483.0 C1147.8,483.0 1160.5,483.0 1170.0,483.0 C1179.5,483.0 1192.5,482.9 1200.0,482.8 C1207.5,482.7 1210.9,482.6 1215.0,482.5 C1219.1,482.4 1221.9,482.6 1224.4,482.2 C1226.9,481.8 1227.5,481.7 1230.0,480.4 C1232.5,479.1 1236.6,476.9 1239.7,474.5 C1242.8,472.1 1245.9,470.2 1248.5,465.8 C1251.1,461.4 1253.2,454.8 1255.3,448.3 C1257.4,441.8 1259.3,434.4 1261.1,426.9 C1262.9,419.4 1264.4,412.6 1266.0,403.5 C1267.6,394.4 1269.0,382.2 1270.8,372.5 C1272.6,362.8 1274.8,354.0 1276.6,345.2 C1278.4,336.4 1280.0,327.7 1281.5,319.9 C1283.0,312.1 1284.0,303.3 1285.4,298.6 C1286.8,293.9 1288.3,291.8 1289.9,291.8 C1291.5,291.8 1293.1,294.6 1295.1,298.6 C1297.1,302.6 1299.8,309.5 1301.9,316.0 C1304.0,322.5 1305.8,329.3 1307.7,337.4 C1309.7,345.5 1311.6,355.6 1313.6,364.7 C1315.5,373.8 1317.5,382.2 1319.4,391.9 C1321.3,401.6 1323.3,413.9 1325.2,423.0 C1327.1,432.1 1328.9,438.9 1331.0,446.3 C1333.1,453.8 1335.7,462.0 1337.8,467.7 C1339.9,473.4 1341.9,477.9 1343.7,480.4 C1345.5,482.9 1345.8,482.4 1348.5,482.9 C1351.2,483.4 1351.5,483.1 1360.0,483.2 C1368.5,483.2 1392.8,483.2 1399.4,483.2" fill="none" stroke="#1f77b4" stroke-width="2.7" stroke-linejoin="round" stroke-linecap="square"/>
<rect x="1138.9" y="372.0" width="160.2" height="31.4" rx="3" fill="rgba(255,255,255,0.8)" stroke="#cccccc" stroke-width="1.3"/>
<line x1="1145.4" y1="387.7" x2="1181.7" y2="387.7" stroke="#1f77b4" stroke-width="2.7"/>
<text x="1194.60" y="392.90" font-family="Liberation Sans" font-size="17.4" fill="#000" textLength="96.7" lengthAdjust="spacingAndGlyphs">math score</text>
<rect x="1130.4" y="283.4" width="282.0" height="210.0" fill="none" stroke="#000" stroke-width="1.35"/>
<line x1="1124.4" y1="483.85" x2="1130.4" y2="483.85" stroke="#000" stroke-width="1.35"/>
<text x="1116.40" y="490.15" font-family="Liberation Sans" font-size="17.4" fill="#000" text-anchor="end" textLength="48.0" lengthAdjust="spacingAndGlyphs">0.000</text>
<line x1="1124.4" y1="447.63" x2="1130.4" y2="447.63" stroke="#000" stroke-width="1.35"/>
<text x="1116.40" y="453.93" font-family="Liberation Sans" font-size="17.4" fill="#000" text-anchor="end" textLength="48.0" lengthAdjust="spacingAndGlyphs">0.005</text>
<line x1="1124.4" y1="411.40" x2="1130.4" y2="411.40" stroke="#000" stroke-width="1.35"/>
<text x="1116.40" y="417.70" font-family="Liberation Sans" font-size="17.4" fill="#000" text-anchor="end" textLength="48.0" lengthAdjust="spacingAndGlyphs">0.010</text>
<line x1="1124.4" y1="375.18" x2="1130.4" y2="375.18" stroke="#000" stroke-width="1.35"/>
<text x="1116.40" y="381.48" font-family="Liberation Sans" font-size="17.4" fill="#000" text-anchor="end" textLength="48.0" lengthAdjust="spacingAndGlyphs">0.015</text>
<line x1="1124.4" y1="338.95" x2="1130.4" y2="338.95" stroke="#000" stroke-width="1.35"/>
<text x="1116.40" y="345.25" font-family="Liberation Sans" font-size="17.4" fill="#000" text-anchor="end" textLength="48.0" lengthAdjust="spacingAndGlyphs">0.020</text>
<line x1="1124.4" y1="302.73" x2="1130.4" y2="302.73" stroke="#000" stroke-width="1.35"/>
<text x="1116.40" y="309.03" font-family="Liberation Sans" font-size="17.4" fill="#000" text-anchor="end" textLength="48.0" lengthAdjust="spacingAndGlyphs">0.025</text>
<line x1="1143.22" y1="493.4" x2="1143.22" y2="499.4" stroke="#000" stroke-width="1.35"/>
<line x1="1207.31" y1="493.4" x2="1207.31" y2="499.4" stroke="#000" stroke-width="1.35"/>
<line x1="1271.40" y1="493.4" x2="1271.40" y2="499.4" stroke="#000" stroke-width="1.35"/>
<line x1="1335.49" y1="493.4" x2="1335.49" y2="499.4" stroke="#000" stroke-width="1.35"/>
<line x1="1399.58" y1="493.4" x2="1399.58" y2="499.4" stroke="#000" stroke-width="1.35"/>
<text x="0" y="0" transform="translate(1058.1,388.4) rotate(-90)" font-family="Liberation Sans" font-size="17.4" text-anchor="middle" textLength="64" lengthAdjust="spacingAndGlyphs">Density</text>
<path d="M1513.7,483.2 C1518.1,483.2 1532.6,483.2 1540.0,483.1 C1547.4,483.0 1552.7,483.2 1558.0,482.6 C1563.3,482.0 1567.2,480.9 1571.7,479.4 C1576.2,477.9 1582.1,475.8 1585.3,473.5 C1588.5,471.2 1588.8,470.7 1591.1,465.8 C1593.4,460.9 1596.5,451.5 1598.9,444.4 C1601.3,437.3 1603.9,430.4 1605.7,423.0 C1607.5,415.6 1608.3,408.8 1609.6,399.7 C1610.9,390.6 1612.0,378.0 1613.5,368.6 C1615.0,359.2 1616.7,351.1 1618.3,343.3 C1619.9,335.5 1621.7,327.4 1623.2,321.9 C1624.7,316.4 1625.5,313.6 1627.1,310.2 C1628.7,306.8 1631.1,304.4 1632.9,301.5 C1634.7,298.6 1636.3,293.5 1637.8,292.7 C1639.3,291.9 1640.2,292.1 1641.7,296.6 C1643.2,301.1 1644.7,311.8 1646.5,319.9 C1648.3,328.0 1650.8,337.1 1652.4,345.2 C1654.0,353.3 1654.9,359.5 1656.2,368.6 C1657.5,377.7 1658.6,389.0 1660.1,399.7 C1661.6,410.4 1663.2,423.6 1665.0,432.7 C1666.8,441.8 1668.7,447.1 1670.8,454.1 C1672.9,461.1 1675.3,469.8 1677.6,474.5 C1679.9,479.2 1680.7,480.9 1684.4,482.3 C1688.1,483.7 1693.0,482.9 1700.0,483.0 C1707.0,483.1 1722.1,483.1 1726.5,483.1" fill="none" stroke="#ff7f0e" stroke-width="2.7" stroke-linejoin="round" stroke-linecap="square"/>
<rect x="1477.3" y="372.0" width="181.4" height="31.4" rx="3" fill="rgba(255,255,255,0.8)" stroke="#cccccc" stroke-width="1.3"/>
<line x1="1483.5" y1="387.7" x2="1520.8" y2="387.7" stroke="#ff7f0e" stroke-width="2.7"/>
<text x="1532.50" y="392.90" font-family="Liberation Sans" font-size="17.4" fill="#000" textLength="117.5" lengthAdjust="spacingAndGlyphs">reading score</text>
<rect x="1468.5" y="283.4" width="282.0" height="210.0" fill="none" stroke="#000" stroke-width="1.35"/>
<line x1="1462.5" y1="483.85" x2="1468.5" y2="483.85" stroke="#000" stroke-width="1.35"/>
<text x="1454.50" y="490.15" font-family="Liberation Sans" font-size="17.4" fill="#000" text-anchor="end" textLength="48.0" lengthAdjust="spacingAndGlyphs">0.000</text>
<line x1="1462.5" y1="447.45" x2="1468.5" y2="447.45" stroke="#000" stroke-width="1.35"/>
<text x="1454.50" y="453.75" font-family="Liberation Sans" font-size="17.4" fill="#000" text-anchor="end" textLength="48.0" lengthAdjust="spacingAndGlyphs">0.005</text>
<line x1="1462.5" y1="411.04" x2="1468.5" y2="411.04" stroke="#000" stroke-width="1.35"/>
<text x="1454.50" y="417.34" font-family="Liberation Sans" font-size="17.4" fill="#000" text-anchor="end" textLength="48.0" lengthAdjust="spacingAndGlyphs">0.010</text>
<line x1="1462.5" y1="374.64" x2="1468.5" y2="374.64" stroke="#000" stroke-width="1.35"/>
<text x="1454.50" y="380.94" font-family="Liberation Sans" font-size="17.4" fill="#000" text-anchor="end" textLength="48.0" lengthAdjust="spacingAndGlyphs">0.015</text>
<line x1="1462.5" y1="338.23" x2="1468.5" y2="338.23" stroke="#000" stroke-width="1.35"/>
<text x="1454.50" y="344.53" font-family="Liberation Sans" font-size="17.4" fill="#000" text-anchor="end" textLength="48.0" lengthAdjust="spacingAndGlyphs">0.020</text>
<line x1="1462.5" y1="301.83" x2="1468.5" y2="301.83" stroke="#000" stroke-width="1.35"/>
<text x="1454.50" y="308.13" font-family="Liberation Sans" font-size="17.4" fill="#000" text-anchor="end" textLength="48.0" lengthAdjust="spacingAndGlyphs">0.025</text>
<line x1="1481.32" y1="493.4" x2="1481.32" y2="499.4" stroke="#000" stroke-width="1.35"/>
<text x="1464.12" y="519.00" font-family="Liberation Sans" font-size="17.4" fill="#000" textLength="34.4" lengthAdjust="spacingAndGlyphs">&#8722;50</text>
<line x1="1545.41" y1="493.4" x2="1545.41" y2="499.4" stroke="#000" stroke-width="1.35"/>
<text x="1539.91" y="519.00" font-family="Liberation Sans" font-size="17.4" fill="#000" textLength="11.0" lengthAdjust="spacingAndGlyphs">0</text>
<line x1="1609.50" y1="493.4" x2="1609.50" y2="499.4" stroke="#000" stroke-width="1.35"/>
<text x="1598.75" y="519.00" font-family="Liberation Sans" font-size="17.4" fill="#000" textLength="21.5" lengthAdjust="spacingAndGlyphs">50</text>
<line x1="1673.59" y1="493.4" x2="1673.59" y2="499.4" stroke="#000" stroke-width="1.35"/>
<text x="1657.49" y="519.00" font-family="Liberation Sans" font-size="17.4" fill="#000" textLength="32.2" lengthAdjust="spacingAndGlyphs">100</text>
<line x1="1737.68" y1="493.4" x2="1737.68" y2="499.4" stroke="#000" stroke-width="1.35"/>
<text x="1721.58" y="519.00" font-family="Liberation Sans" font-size="17.4" fill="#000" textLength="32.2" lengthAdjust="spacingAndGlyphs">150</text>
<text x="0" y="0" transform="translate(1396.2,388.4) rotate(-90)" font-family="Liberation Sans" font-size="17.4" text-anchor="middle" textLength="64" lengthAdjust="spacingAndGlyphs">Density</text>
<path d="M1162.5,735.3 C1167.1,735.3 1182.4,735.3 1190.0,735.2 C1197.6,735.1 1203.3,735.1 1208.3,734.9 C1213.3,734.6 1216.1,734.2 1220.0,733.7 C1223.9,733.2 1228.1,732.8 1231.7,731.8 C1235.3,730.8 1238.5,729.8 1241.4,727.5 C1244.3,725.2 1246.8,722.7 1249.2,717.8 C1251.6,712.9 1253.9,705.4 1256.0,698.3 C1258.1,691.2 1260.0,682.1 1261.8,675.0 C1263.6,667.9 1265.1,662.7 1266.7,655.6 C1268.3,648.5 1270.0,639.3 1271.5,632.2 C1273.0,625.1 1273.8,618.3 1275.4,612.8 C1277.0,607.3 1279.4,604.4 1281.2,599.2 C1283.0,594.0 1284.3,588.5 1286.1,581.7 C1287.9,574.9 1289.8,564.6 1291.9,558.3 C1294.0,552.0 1296.6,544.7 1298.7,543.7 C1300.8,542.7 1302.8,547.5 1304.6,552.5 C1306.4,557.5 1307.8,564.5 1309.4,573.9 C1311.0,583.3 1312.7,597.2 1314.3,608.9 C1315.9,620.6 1317.4,633.5 1319.2,643.9 C1321.0,654.3 1322.9,662.7 1325.0,671.1 C1327.1,679.5 1329.5,686.6 1331.8,694.4 C1334.1,702.2 1336.3,711.3 1338.6,717.8 C1340.9,724.3 1343.1,730.4 1345.4,733.3 C1347.7,736.2 1349.8,734.9 1352.2,735.3 C1354.6,735.6 1353.2,735.4 1360.0,735.4 C1366.8,735.4 1387.8,735.4 1393.3,735.4" fill="none" stroke="#2ca02c" stroke-width="2.7" stroke-linejoin="round" stroke-linecap="square"/>
<rect x="1139.2" y="624.4" width="174.4" height="31.7" rx="3" fill="rgba(255,255,255,0.8)" stroke="#cccccc" stroke-width="1.3"/>
<line x1="1145.7" y1="640.2" x2="1182.0" y2="640.2" stroke="#2ca02c" stroke-width="2.7"/>
<text x="1194.00" y="645.45" font-family="Liberation Sans" font-size="17.4" fill="#000" textLength="112.0" lengthAdjust="spacingAndGlyphs">writing score</text>
<rect x="1130.4" y="535.5" width="282.0" height="209.9" fill="none" stroke="#000" stroke-width="1.35"/>
<line x1="1124.4" y1="735.86" x2="1130.4" y2="735.86" stroke="#000" stroke-width="1.35"/>
<text x="1116.40" y="742.16" font-family="Liberation Sans" font-size="17.4" fill="#000" text-anchor="end" textLength="48.0" lengthAdjust="spacingAndGlyphs">0.000</text>
<line x1="1124.4" y1="698.84" x2="1130.4" y2="698.84" stroke="#000" stroke-width="1.35"/>
<text x="1116.40" y="705.14" font-family="Liberation Sans" font-size="17.4" fill="#000" text-anchor="end" textLength="48.0" lengthAdjust="spacingAndGlyphs">0.005</text>
<line x1="1124.4" y1="661.81" x2="1130.4" y2="661.81" stroke="#000" stroke-width="1.35"/>
<text x="1116.40" y="668.11" font-family="Liberation Sans" font-size="17.4" fill="#000" text-anchor="end" textLength="48.0" lengthAdjust="spacingAndGlyphs">0.010</text>
<line x1="1124.4" y1="624.79" x2="1130.4" y2="624.79" stroke="#000" stroke-width="1.35"/>
<text x="1116.40" y="631.09" font-family="Liberation Sans" font-size="17.4" fill="#000" text-anchor="end" textLength="48.0" lengthAdjust="spacingAndGlyphs">0.015</text>
<line x1="1124.4" y1="587.77" x2="1130.4" y2="587.77" stroke="#000" stroke-width="1.35"/>
<text x="1116.40" y="594.07" font-family="Liberation Sans" font-size="17.4" fill="#000" text-anchor="end" textLength="48.0" lengthAdjust="spacingAndGlyphs">0.020</text>
<line x1="1124.4" y1="550.74" x2="1130.4" y2="550.74" stroke="#000" stroke-width="1.35"/>
<text x="1116.40" y="557.04" font-family="Liberation Sans" font-size="17.4" fill="#000" text-anchor="end" textLength="48.0" lengthAdjust="spacingAndGlyphs">0.025</text>
<line x1="1143.22" y1="745.4" x2="1143.22" y2="751.4" stroke="#000" stroke-width="1.35"/>
<text x="1126.02" y="771.00" font-family="Liberation Sans" font-size="17.4" fill="#000" textLength="34.4" lengthAdjust="spacingAndGlyphs">&#8722;50</text>
<line x1="1207.31" y1="745.4" x2="1207.31" y2="751.4" stroke="#000" stroke-width="1.35"/>
<text x="1201.81" y="771.00" font-family="Liberation Sans" font-size="17.4" fill="#000" textLength="11.0" lengthAdjust="spacingAndGlyphs">0</text>
<line x1="1271.40" y1="745.4" x2="1271.40" y2="751.4" stroke="#000" stroke-width="1.35"/>
<text x="1260.65" y="771.00" font-family="Liberation Sans" font-size="17.4" fill="#000" textLength="21.5" lengthAdjust="spacingAndGlyphs">50</text>
<line x1="1335.49" y1="745.4" x2="1335.49" y2="751.4" stroke="#000" stroke-width="1.35"/>
<text x="1319.39" y="771.00" font-family="Liberation Sans" font-size="17.4" fill="#000" textLength="32.2" lengthAdjust="spacingAndGlyphs">100</text>
<line x1="1399.58" y1="745.4" x2="1399.58" y2="751.4" stroke="#000" stroke-width="1.35"/>
<text x="1383.48" y="771.00" font-family="Liberation Sans" font-size="17.4" fill="#000" textLength="32.2" lengthAdjust="spacingAndGlyphs">150</text>
<text x="0" y="0" transform="translate(1058.1,640.5) rotate(-90)" font-family="Liberation Sans" font-size="17.4" text-anchor="middle" textLength="64" lengthAdjust="spacingAndGlyphs">Density</text>
<g fill="#000">
<path d="M1036.5,837.5 L1049,826.5 L1054,831 V827 H1057.5 V834 L1061.5,837.5 L1060,839 L1049,829.5 L1038,839 Z"/>
<path d="M1041,838.5 L1049,831.5 L1057,838.5 V847.5 H1052 V841.5 H1046 V847.5 H1041 Z"/>
</g>
<g fill="none" stroke="#8c8c8c" stroke-linejoin="miter"><polyline points="1083.5,825 1075,835.5 1083.5,846" stroke-width="5.6"/><line x1="1076" y1="835.5" x2="1095.5" y2="835.5" stroke-width="6"/><polyline points="1116.5,825 1125,835.5 1116.5,846" stroke-width="5.6"/><line x1="1104.5" y1="835.5" x2="1124" y2="835.5" stroke-width="6"/></g>
<g fill="#a0a0a0"><rect x="1139" y="820" width="1" height="30"/><rect x="1256" y="820" width="1" height="30"/></g>
<g fill="#000"><path d="M1163,822 L1168,828 H1165 V833 H1170 V830 L1177,835.5 L1170,841 V838 H1165 V843 H1168 L1163,849.5 L1158,843 H1161 V838 H1156 V841 L1149,835.5 L1156,830 V833 H1161 V828 H1158 Z"/></g>
<g fill="none" stroke="#000"><circle cx="1196.3" cy="833.3" r="8.4" stroke-width="4.3"/><line x1="1202.5" y1="839.5" x2="1210" y2="847" stroke-width="3.8" stroke-linecap="round"/></g>
<g fill="#000"><rect x="1222" y="827.5" width="24" height="1.6"/><rect x="1222" y="835.2" width="24" height="1.6"/><rect x="1222" y="843" width="24" height="1.6"/><rect x="1226" y="824.5" width="5" height="7" rx="0.6"/><rect x="1237" y="832.3" width="5" height="7" rx="0.6"/><rect x="1228" y="840" width="5" height="7" rx="0.6"/></g>
<g><path d="M1267,825 C1267,824 1267.5,823.5 1268.5,823.5 H1286 L1291,828.5 V846.5 C1291,847.5 1290.5,848 1289.5,848 H1268.5 C1267.5,848 1267,847.5 1267,846.5 Z" fill="none" stroke="#000" stroke-width="2.6"/><path d="M1272,823.5 V831 H1284 V823.5" fill="#000"/><rect x="1271" y="837" width="16" height="11" fill="none" stroke="#000" stroke-width="2.4"/><rect x="1279" y="825.5" width="3" height="4" fill="#fff"/></g>
</svg>
</div>
<svg style="left:0;top:0" width="1920" height="1080" viewBox="0 0 1920 1080">
<g opacity="0.5" fill="#a6a7a8" stroke="#a6a7a8">
 <rect x="879" y="1001.9" width="159" height="10.6" stroke="none"/>
 <circle cx="1052.9" cy="997.6" r="16.1" fill="none" stroke-width="10.9"/>
 <circle cx="921.4" cy="990.8" r="15.2" fill="none" stroke-width="10.2"/>
 <g stroke="none"><circle cx="913.3" cy="959.0" r="6.8"/><circle cx="929.9" cy="959.0" r="6.8"/><circle cx="954.2" cy="973.1" r="6.9"/><circle cx="970.5" cy="973.1" r="6.9"/></g>
 <g fill="none" stroke-width="10.8" stroke-linecap="round">
  <line x1="962.2" y1="990.6" x2="961.2" y2="1005"/>
  <line x1="983.8" y1="990.6" x2="982.4" y2="1005"/>
  <line x1="1000.9" y1="986.5" x2="998.7" y2="1005"/>
  <line x1="1017.4" y1="983.6" x2="1015.3" y2="1005"/>
  <line x1="884" y1="957.6" x2="884" y2="1005"/>
  <path d="M866.6,981.8 A16.1,16.1 0 0 0 866.6,1014.0 C873,1014 878,1012 884,1007.2 L895,1007.2" stroke-linecap="round" stroke-linejoin="round"/>
 </g>
 
 <text x="845" y="1049.7" font-family="Liberation Sans" font-weight="bold" font-size="37" stroke-width="0.6" textLength="227" lengthAdjust="spacingAndGlyphs">mostaql.com</text>
</g>
</svg>
</body></html>
